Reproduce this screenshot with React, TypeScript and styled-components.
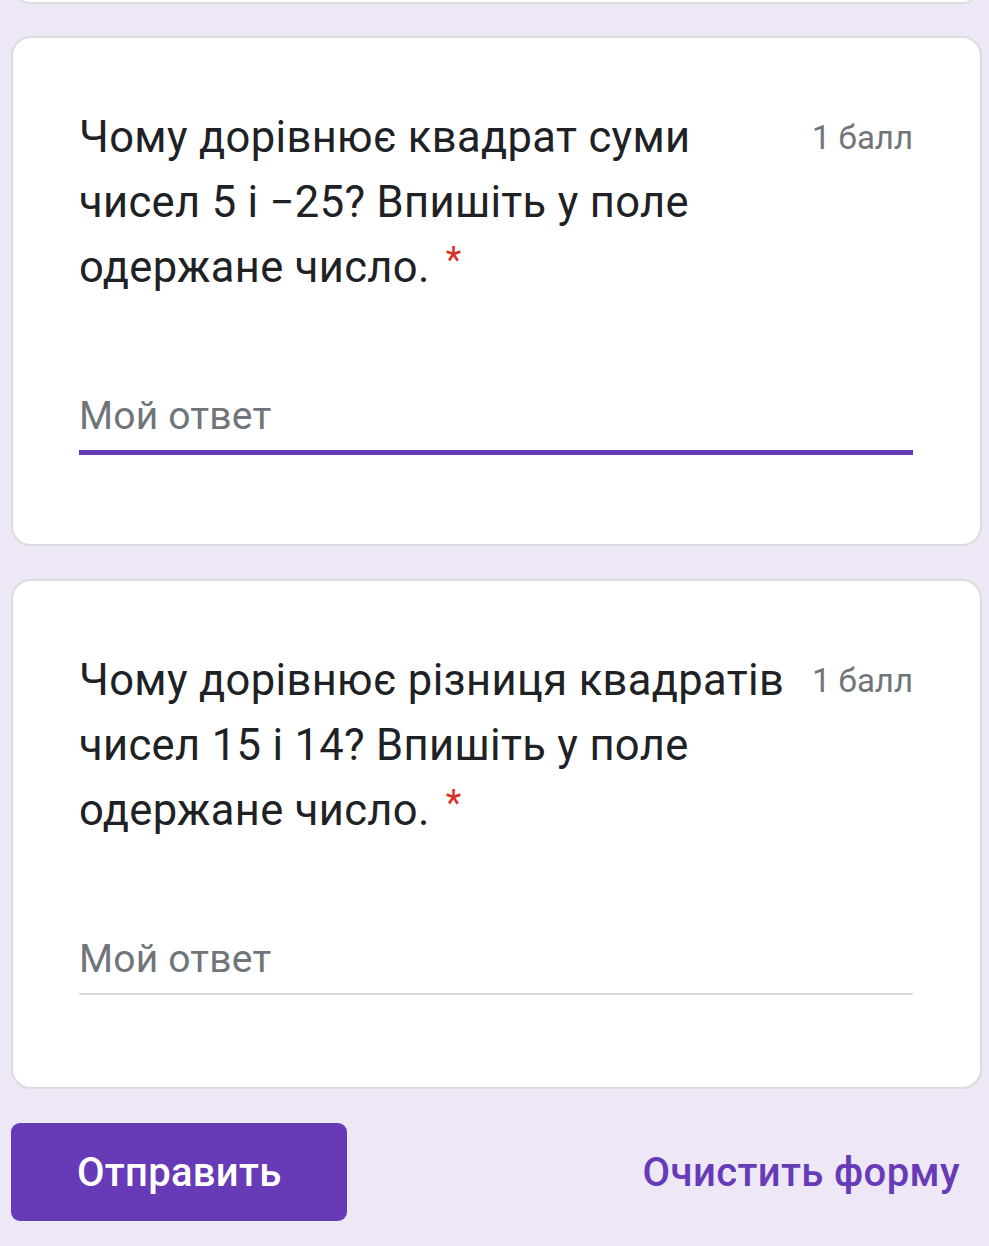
import React from "react";
import styled, { createGlobalStyle } from "styled-components";

const Global = createGlobalStyle`
  html, body { margin: 0; padding: 0; background: #ede7f6; }
  body { font-family: Roboto, "Noto Sans", sans-serif; }
`;

const Page = styled.div`
  width: 989px;
  min-height: 1246px;
  background: #ede7f6;
  padding: 0 7px 0 11px;
  box-sizing: border-box;
  display: flex;
  flex-direction: column;
  gap: 33px;
  overflow: hidden;
`;

const PrevCardEdge = styled.div`
  height: 24px;
  margin-top: -22px;
  margin-bottom: -1px;
  background: #fff;
  border: 2px solid #dadce0;
  border-top: none;
  border-radius: 0 0 20px 20px;
`;

const Card = styled.div`
  background: #fff;
  border: 2px solid #dadce0;
  border-radius: 20px;
  padding: 67px 67px 0 66px;
  box-sizing: border-box;
  height: 510px;
`;

const QuestionRow = styled.div`
  display: flex;
  align-items: flex-start;
  gap: 20px;
`;

const Title = styled.div`
  flex: 1;
  min-width: 0;
  font-family: Roboto, sans-serif;
  font-size: 43.5px;
  line-height: 65px;
  color: #202124;
  letter-spacing: 0.35px;
  white-space: nowrap;
`;

const Required = styled.span`
  color: #d93025;
  margin-left: 16px;
  font-size: 36px;
  position: relative;
  top: -10px;
`;

const Points = styled.div`
  font-family: Roboto, sans-serif;
  font-size: 33px;
  line-height: 65px;
  color: #70757a;
  white-space: nowrap;
`;

const InputArea = styled.div`
  margin-top: 79px;
`;

const Placeholder = styled.div`
  font-family: Roboto, sans-serif;
  font-size: 39px;
  line-height: 68px;
  color: #70757a;
  letter-spacing: 0.2px;
`;

const Underline = styled.div<{ $active?: boolean }>`
  height: 5px;
  box-sizing: border-box;
  border-top: ${(p) => (p.$active ? "5px solid #673ab7" : "2px solid #dadce0")};
`;

const Footer = styled.div`
  display: flex;
  align-items: center;
  justify-content: space-between;
  padding-right: 22px;
  margin-top: 1px;
`;

const SubmitButton = styled.button`
  width: 336px;
  height: 98px;
  background: #673ab7;
  color: #fff;
  border: none;
  border-radius: 9px;
  font-family: Roboto, sans-serif;
  font-size: 40px;
  font-weight: 500;
  text-align: left;
  padding: 0 0 0 66px;
  letter-spacing: 0.3px;
`;

const ClearButton = styled.button`
  background: none;
  border: none;
  color: #673ab7;
  font-family: Roboto, sans-serif;
  font-size: 40px;
  font-weight: 500;
  padding: 0;
  letter-spacing: 0.4px;
`;

type Q = { text: string[]; active?: boolean };

const questions: Q[] = [
  {
    text: ["Чому дорівнює квадрат суми", "чисел 5 і −25? Впишіть у поле", "одержане число."],
    active: true,
  },
  {
    text: ["Чому дорівнює різниця квадратів", "чисел 15 і 14? Впишіть у поле", "одержане число."],
  },
];

export default function App() {
  return (
    <>
      <Global />
      <Page>
        <PrevCardEdge />
        {questions.map((q, i) => (
          <Card key={i}>
            <QuestionRow>
              <Title>
                {q.text.map((line, j) => (
                  <React.Fragment key={j}>
                    {line}
                    {j === q.text.length - 1 ? <Required>*</Required> : <br />}
                  </React.Fragment>
                ))}
              </Title>
              <Points>1 балл</Points>
            </QuestionRow>
            <InputArea>
              <Placeholder>Мой ответ</Placeholder>
              <Underline $active={q.active} />
            </InputArea>
          </Card>
        ))}
        <Footer>
          <SubmitButton>Отправить</SubmitButton>
          <ClearButton>Очистить форму</ClearButton>
        </Footer>
      </Page>
    </>
  );
}
